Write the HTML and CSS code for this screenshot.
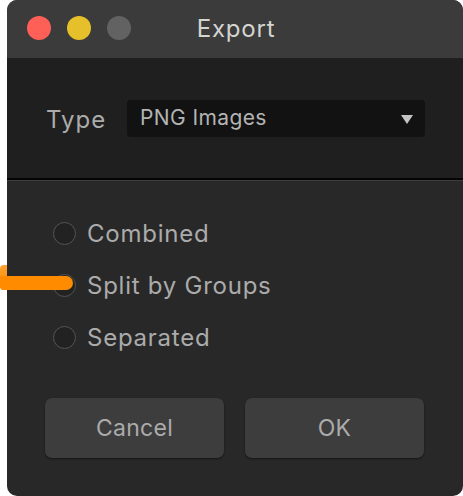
FILE: index.html
```html
<!DOCTYPE html>
<html>
<head>
<meta charset="utf-8">
<link rel="stylesheet" href="styles.css">
</head>
<body>
<div class="window">
  <div class="titlebar">
    <div class="lights">
      <span class="light red"></span>
      <span class="light yellow"></span>
      <span class="light grey"></span>
    </div>
    <div class="title">Export</div>
  </div>
  <div class="top">
    <span class="label">Type</span>
    <div class="select">
      <span>PNG Images</span>
      <svg class="arrow" width="12" height="9" viewBox="0 0 12 9"><path d="M0 0H12L6 9Z" fill="#c4c4c4"/></svg>
    </div>
  </div>
  <div class="sep"></div>
  <div class="bottom">
    <div class="radios">
      <div class="radio"><span class="dot"></span><span>Combined</span></div>
      <div class="radio"><span class="dot"></span><span>Split by Groups</span></div>
      <div class="radio"><span class="dot"></span><span>Separated</span></div>
    </div>
    <div class="buttons">
      <div class="btn">Cancel</div>
      <div class="btn">OK</div>
    </div>
  </div>
</div>
<div class="pointer"></div>
</body>
</html>
```
FILE: styles.css
```css
html, body { margin: 0; padding: 0; background: #fff; }
body { width: 463px; height: 496px; overflow: hidden; position: relative; font-family: Inter, "Open Sans", sans-serif; }
.window {
  margin-left: 7px;
  width: 456px;
  height: 496px;
  border-radius: 10px;
  overflow: hidden;
  background: #282828;
  display: flex;
  flex-direction: column;
}
.titlebar {
  height: 58px;
  background: #3b3b3b;
  position: relative;
  display: flex;
  align-items: center;
  justify-content: center;
}
.lights { position: absolute; left: 20px; top: 16px; display: flex; gap: 16px; }
.light { width: 24px; height: 24px; border-radius: 50%; display: block; }
.red { background: #fe5f57; }
.yellow { background: #e5c02b; }
.grey { background: #626262; }
.title { color: #d4d4d0; font-size: 24px; letter-spacing: 0.8px; margin-left: 2px; margin-top: -2px; }
.top {
  height: 120px;
  background: #1f1f1f;
  display: flex;
  align-items: center;
  padding-left: 39px;
  box-sizing: border-box;
}
.label { color: #ababab; font-size: 24px; letter-spacing: 1px; width: 81px; margin-top: 3px; }
.select {
  width: 298px;
  height: 37px;
  background: #121212;
  border-radius: 4px;
  display: flex;
  align-items: center;
  justify-content: space-between;
  padding: 0 12px 0 13px;
  box-sizing: border-box;
  color: #b4b4b4;
  font-size: 21px;
  letter-spacing: 0.4px;
  margin-top: 1px;
}
.select span { margin-top: -3px; }
.arrow { margin-top: 2px; }
.sep { height: 2px; background: #050505; border-bottom: 1px solid #3d3d3d; }
.bottom { flex: 1; display: flex; flex-direction: column; padding: 37px 0 0 38px; }
.radios { display: flex; flex-direction: column; gap: 22px; }
.radio { display: flex; align-items: center; height: 30px; color: #ababab; font-size: 24px; letter-spacing: 0.75px; gap: 11px; }
.dot { width: 21px; height: 21px; border: 1.5px solid #545454; border-radius: 50%; background: #222; margin-left: 8px; flex: none; }
.buttons { display: flex; gap: 21px; margin-top: 46px; }
.btn {
  width: 179px; height: 60px;
  background: #3d3d3d;
  border-radius: 7px;
  box-shadow: 0 1px 2px rgba(0,0,0,0.5);
  color: #ababab; font-size: 23px; letter-spacing: 0.3px;
  display: flex; align-items: center; justify-content: center;
}
.pointer {
  position: absolute;
  left: 0; top: 265px;
  width: 73px; height: 25px;
  background: linear-gradient(#ff8c00, #ff8c00) 0 11px / 100% 14px no-repeat, linear-gradient(#ffa22e, #ff8c00) 0 0 / 7px 25px no-repeat;
  clip-path: path('M0 4 Q0 0 4 0 H7 V11 H66 A7 7 0 0 1 66 25 H4 Q0 25 0 21 Z');
}
```
